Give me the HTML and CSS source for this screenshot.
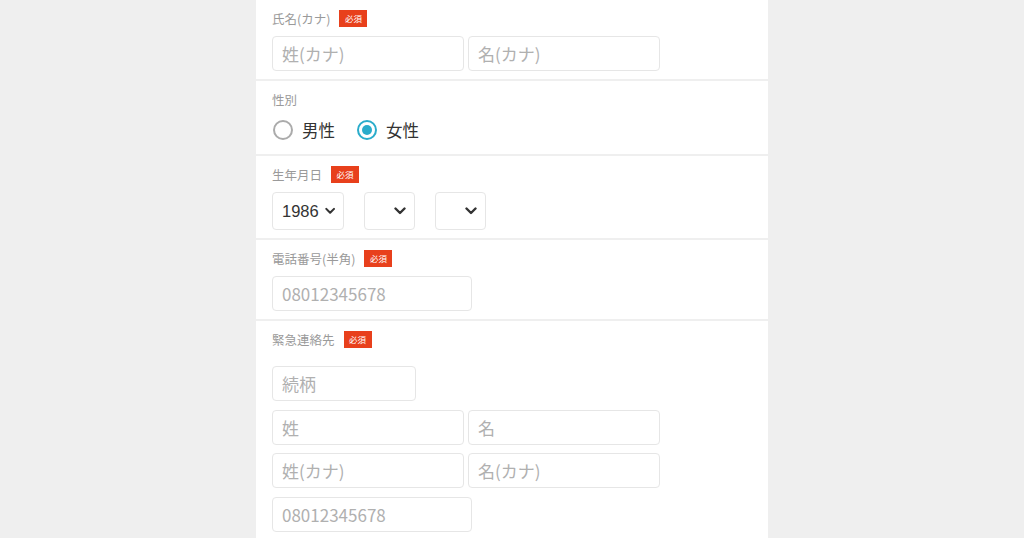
FILE: index.html
```html
<!DOCTYPE html>
<html lang="ja">
<head>
<meta charset="utf-8">
<title>Form</title>
<link rel="stylesheet" href="styles.css">
</head>
<body>
<div class="panel">
  <section class="sec">
    <div class="label-row"><span class="label">氏名(カナ)</span><span class="badge">必須</span></div>
    <div class="row">
      <div class="input half">姓(カナ)</div>
      <div class="input half">名(カナ)</div>
    </div>
  </section>
  <section class="sec">
    <div class="label-row"><span class="label">性別</span></div>
    <div class="radios">
      <label class="radio"><span class="circle"></span><span class="rtext">男性</span></label>
      <label class="radio"><span class="circle on"></span><span class="rtext">女性</span></label>
    </div>
  </section>
  <section class="sec">
    <div class="label-row"><span class="label">生年月日</span><span class="badge">必須</span></div>
    <div class="selects">
      <div class="select year"><span class="sval">1986</span><svg class="chev" viewBox="0 0 12 8" width="12" height="8"><path d="M1.5 1.5 L6 6 L10.5 1.5" fill="none" stroke="#333" stroke-width="2.4" stroke-linecap="round" stroke-linejoin="round"/></svg></div>
      <div class="select small"><svg class="chev" viewBox="0 0 12 8" width="12" height="8"><path d="M1.5 1.5 L6 6 L10.5 1.5" fill="none" stroke="#333" stroke-width="2.4" stroke-linecap="round" stroke-linejoin="round"/></svg></div>
      <div class="select small"><svg class="chev" viewBox="0 0 12 8" width="12" height="8"><path d="M1.5 1.5 L6 6 L10.5 1.5" fill="none" stroke="#333" stroke-width="2.4" stroke-linecap="round" stroke-linejoin="round"/></svg></div>
    </div>
  </section>
  <section class="sec">
    <div class="label-row"><span class="label">電話番号(半角)</span><span class="badge">必須</span></div>
    <div class="row">
      <div class="input phone">08012345678</div>
    </div>
  </section>
  <section class="sec last">
    <div class="label-row wide"><span class="label">緊急連絡先</span><span class="badge">必須</span></div>
    <div class="stack">
      <div class="row"><div class="input rel">続柄</div></div>
      <div class="row">
        <div class="input half">姓</div>
        <div class="input half">名</div>
      </div>
      <div class="row">
        <div class="input half">姓(カナ)</div>
        <div class="input half">名(カナ)</div>
      </div>
      <div class="row"><div class="input phone">08012345678</div></div>
    </div>
  </section>
</div>
</body>
</html>
```

FILE: styles.css
```css
html, body {
  margin: 0;
  padding: 0;
  background: #efefef;
  font-family: "Noto Sans CJK JP", "Noto Sans", sans-serif;
}
.panel {
  width: 512px;
  margin: 0 auto;
  display: flex;
  flex-direction: column;
  gap: 2px;
  height: 538px;
  overflow: hidden;
}
.sec {
  background: #fff;
  padding: 10px 16px 8px;
}
.sec.last {
  flex: 1;
}
.label-row {
  display: flex;
  align-items: center;
  height: 17px;
  margin-bottom: 9px;
}
.label-row.wide {
  margin-bottom: 18px;
}
.label {
  font-size: 12.5px;
  color: #9a9a9a;
  line-height: 17px;
}
.badge {
  margin-left: 9px;
  width: 28px;
  height: 17px;
  background: #e8401c;
  color: #fff;
  font-size: 8.5px;
  line-height: 17px;
  text-align: center;
}
.row {
  display: flex;
  gap: 4px;
}
.stack {
  display: flex;
  flex-direction: column;
  gap: 8.5px;
}
.input {
  box-sizing: border-box;
  height: 35px;
  border: 1px solid #e6e6e6;
  border-radius: 4px;
  padding: 0 9px;
  font-size: 17px;
  line-height: 33px;
  color: #b0b0b0;
}
.input.half { width: 192px; }
.input.phone { width: 200px; }
.input.rel { width: 144px; }
.radios {
  display: flex;
  align-items: center;
  height: 26px;
  margin-bottom: 3px;
  gap: 21px;
}
.radio {
  display: flex;
  align-items: center;
}
.circle {
  box-sizing: border-box;
  width: 20px;
  height: 20px;
  border-radius: 50%;
  border: 2px solid #ababab;
  margin: 0 9px 0 1px;
  display: flex;
  align-items: center;
  justify-content: center;
}
.circle.on {
  border-color: #2aaccb;
}
.circle.on::after {
  content: "";
  width: 10px;
  height: 10px;
  border-radius: 50%;
  background: #2aaccb;
}
.rtext {
  font-size: 16.5px;
  color: #333;
}
.selects {
  display: flex;
  gap: 20px;
}
.select {
  box-sizing: border-box;
  height: 38px;
  border: 1px solid #e6e6e6;
  border-radius: 4px;
  display: flex;
  align-items: center;
  justify-content: flex-end;
  padding: 0 8px 0 9px;
}
.select.year { width: 72px; }
.select.small { width: 51px; }
.sval {
  margin-right: 6px;
  font-family: "Liberation Sans", Arial, sans-serif;
  font-size: 16.5px;
  color: #333;
}
.chev {
  display: block;
}
```
